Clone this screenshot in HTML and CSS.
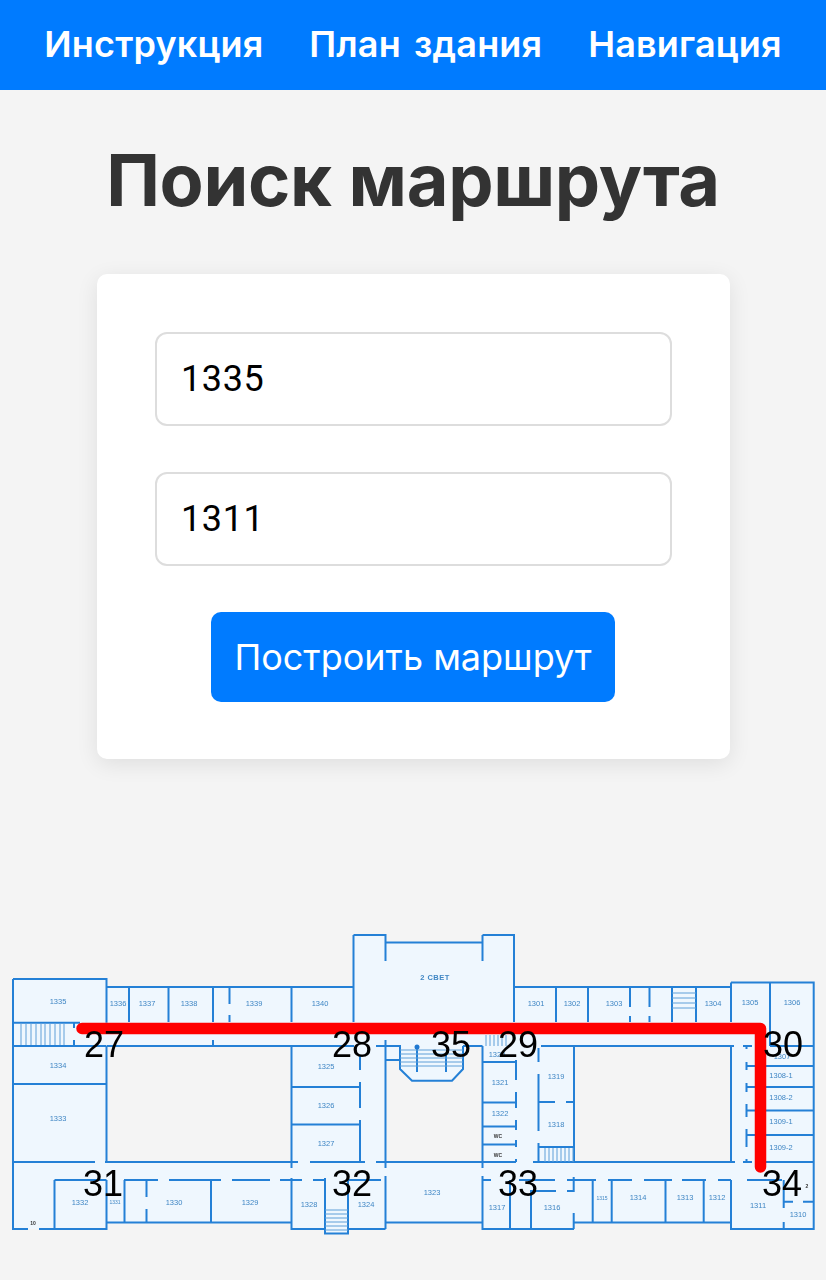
FILE: index.html
```html
<!DOCTYPE html>
<html lang="ru">
<head>
<meta charset="utf-8">
<title>Поиск маршрута</title>
<link rel="stylesheet" href="styles.css">
</head>
<body>
<nav class="nav">
  <a class="nav-link" href="#">Инструкция</a>
  <a class="nav-link" href="#">План здания</a>
  <a class="nav-link" href="#">Навигация</a>
</nav>
<h1 class="title">Поиск маршрута</h1>
<form class="card">
  <input class="field" type="text" value="1335">
  <input class="field" type="text" value="1311">
  <button class="submit" type="button">Построить маршрут</button>
</form>
<svg class="plan" viewBox="0 920 826 340" width="826" height="340" xmlns="http://www.w3.org/2000/svg">
  <path class="floor" d="M13 979H106.5V987H353.5V935H385.5V942.5H482.5V935H514V987H731V982.5H814V1229H731V1222.5H574V1229H482.5V1222.5H385.5V1229H348V1233.5H325V1229H291.5V1222.5H106.5V1229H13Z"/>
  <path class="court" d="M107 1046H291.5V1162H107Z"/>
  <path class="court" d="M385.5 1060H400V1069L412 1080.7H452L463 1069V1046H482.5V1162H385.5Z"/>
  <path class="court" d="M574 1046H731V1162H574Z"/>
  <path class="wall" d="M13 979H106.5V1022.7M13 979V1229H28M39 1229H106.5V1180M13 1022.7H80M13 1046H106.5M12 1084H106.5M13 1162H95M105 1162H298M310 1162H365M376 1162H516M533 1162H735M743 1162H752M766 1162H814
  M106.5 1046V1162M106.5 987H353.5M107 1046H354M129 987V1022M168.5 987V1022M213 987V1022M213 1040V1046M229.5 987V1004M229.5 1015V1022M74 1023V1028M74 1040V1045
  M54.5 1180V1229M54.5 1180H106.5M106.5 1222.5H291.5M124.5 1180V1222M146.5 1180V1197M146.5 1209V1222M211 1180V1222M124 1180H158M169 1180H221M232 1180H270M280 1180H302M313 1180H326M348 1180H381
  M353.5 935V1022M353.5 935H385.5V961M385.5 942.5H482.5M482.5 935V961M482.5 935H514V1022M291.5 987V1022M291.5 1046V1168M291.5 1178V1229H325M348 1229H385.5
  M291.5 1087H360M291.5 1124.5H360M360 1055V1070M360 1082V1108M360 1120V1162
  M385.5 1040V1168M385.5 1176V1229M376 1046H400V1069L412 1080.7H452L463 1069V1046M385.5 1060H400M463 1046H482.5M417 1046V1072M446 1055V1072
  M325 1178V1233.5H348V1178M385.5 1222.5H482.5M482.5 1046V1168M482.5 1176V1229H574
  M482.5 1062H516M516 1060V1080M516 1092V1108M516 1120V1130M516 1140V1147M516 1159V1162M482.5 1102.5H516.5M482.5 1126.5H516.5M482.5 1144.5H516.5
  M538.5 1048V1062M538.5 1074V1131M538.5 1102H555M566 1102H574M538.5 1143V1162M538.5 1147H574
  M482.5 1180H491M519 1180H555M530 1191H556M567 1191H574M510 1180V1229M531 1190V1229
  M514 987H731M556 987V1022M588 987V1022M630 987V1007M630 1016V1022M649.5 987V1007M649.5 1016V1022M672 987V1022M696 987V1022
  M731 982.5V1022M731 982.5H813.7V1229H731V1180M770 982.5V1046M541 1046H734M743 1046H752M770 1046H814M574 1046V1162M731 1046V1162
  M746.5 1046V1049M746.5 1062V1070M746.5 1083V1092M746.5 1104V1117M746.5 1129V1147M746.5 1159V1162M746.5 1066H814M746.5 1087H814M746.5 1110.5H814M746.5 1135H814
  M567 1180H596M608 1180H632M644 1180H672M682 1180H706M718 1180H731M747 1180H782M573.7 1177V1192M573.7 1213V1229M592.7 1180V1222M611.7 1180V1222M665.5 1180V1222M703.7 1180V1222M574 1222.5H731
  M783.7 1180V1208M783.7 1222V1229M784 1201.7H793M803 1201.7H814"/>
  <path class="stair" d="M21 1023V1045M26 1023V1045M31 1023V1045M36 1023V1045M41 1023V1045M45 1023V1045M50 1023V1045M55 1023V1045M60 1023V1045M64 1023V1045
  M400 1050H463M400 1054H463M400 1058H463M400 1062H463M400 1066H463M325 1210H348M325 1214H348M325 1218H348M325 1222H348M325 1226H348M325 1230H348
  M486 1035V1046M490 1035V1046M494 1035V1046M498 1035V1046M502 1035V1046M506 1035V1046M545 1148V1162M549 1148V1162M553 1148V1162M557 1148V1162M561 1148V1162M565 1148V1162M569 1148V1162M573 1148V1162
  M672 993H696M672 998H696M672 1003H696M672 1008H696"/>
  <circle class="dot" cx="417" cy="1047" r="2.5"/>
  <g class="rooms">
    <text x="58" y="1004">1335</text><text x="118" y="1006">1336</text><text x="147" y="1006">1337</text><text x="189" y="1006">1338</text><text x="254" y="1006">1339</text><text x="320" y="1006">1340</text>
    <text x="536" y="1006">1301</text><text x="572" y="1006">1302</text><text x="614" y="1006">1303</text><text x="713" y="1006">1304</text><text x="750" y="1005">1305</text><text x="792" y="1005">1306</text>
    <text x="58" y="1068">1334</text><text x="58" y="1121">1333</text><text x="326" y="1069">1325</text><text x="326" y="1108">1326</text><text x="326" y="1146">1327</text>
    <text x="497" y="1057">1320</text><text x="500" y="1085">1321</text><text x="500" y="1116">1322</text><text x="556" y="1079">1319</text><text x="556" y="1127">1318</text>
    <text x="782" y="1059">1307</text><text x="781" y="1078">1308-1</text><text x="781" y="1100">1308-2</text><text x="781" y="1124">1309-1</text><text x="781" y="1150">1309-2</text>
    <text x="80" y="1205">1332</text><text x="174" y="1205">1330</text><text x="250" y="1205">1329</text><text x="309" y="1207">1328</text><text x="366" y="1207">1324</text><text x="432" y="1195">1323</text>
    <text x="497" y="1210">1317</text><text x="552" y="1210">1316</text><text x="638" y="1200">1314</text><text x="685" y="1200">1313</text><text x="717" y="1200">1312</text><text x="758" y="1208">1311</text><text x="798" y="1217">1310</text>
    <text class="tiny" x="115" y="1204">1331</text><text class="tiny" x="602" y="1200">1315</text>
    <text class="bold" x="435" y="980">2 СВЕТ</text>
    <text class="mark" x="498" y="1138">WC</text><text class="mark" x="498" y="1157">WC</text><text class="mark" x="33" y="1225">10</text><text class="mark" x="807" y="1188">2</text>
  </g>
  <path class="route" d="M82 1028.5H760.5V1167"/>
  <g class="points">
    <text x="84" y="1057">27</text><text x="332" y="1057">28</text><text x="431" y="1057">35</text><text x="498" y="1057">29</text><text x="763" y="1057">30</text>
    <text x="83" y="1196">31</text><text x="332" y="1196">32</text><text x="498" y="1196">33</text><text x="762" y="1196">34</text>
  </g>
</svg>
</body>
</html>
```
FILE: styles.css
```css
* { box-sizing: border-box; }
html, body { margin: 0; padding: 0; }
body {
  background: #f4f4f4;
  color: #333;
  font-family: Inter, "Noto Sans", sans-serif;
}
.nav {
  display: flex;
  justify-content: center;
  align-items: center;
  gap: 46px;
  height: 90px;
  padding-bottom: 3px;
  background: #007bff;
}
.nav-link {
  color: #fff;
  font-size: 36px;
  font-weight: 600;
  letter-spacing: 0.15px;
  word-spacing: 4px;
  text-decoration: none;
  white-space: nowrap;
}
.title {
  margin: 0;
  padding-top: 46px;
  height: 184px;
  text-align: center;
  font-size: 72px;
  line-height: 88px;
  font-weight: 650;
  letter-spacing: -0.3px;
  color: #333;
}
.card {
  display: flex;
  flex-direction: column;
  align-items: center;
  width: 633px;
  height: 485px;
  margin-left: 97px;
  padding: 58px 58px 0;
  background: #fff;
  border-radius: 10px;
  box-shadow: 0 5px 22px rgba(0, 0, 0, 0.09);
}
.field {
  display: block;
  width: 517px;
  height: 94px;
  margin-bottom: 46px;
  padding: 0 24px;
  border: 2px solid #ddd;
  border-radius: 12px;
  background: #fff;
  color: #000;
  font-family: Roboto, sans-serif;
  font-size: 36px;
  letter-spacing: 0.6px;
  outline: none;
}
.submit {
  width: 404px;
  height: 90px;
  margin-right: 1px;
  border: 0;
  border-radius: 10px;
  background: #007bff;
  color: #fff;
  font-family: inherit;
  font-size: 36px;
  font-weight: 400;
  white-space: nowrap;
  padding: 0;
}
.plan {
  display: block;
  margin-top: 161px;
  filter: blur(0.35px);
}
.floor { fill: #eff7fe; }
.court { fill: #f4f4f4; }
.wall { fill: none; stroke: #2480d6; stroke-width: 2; }
.stair { fill: none; stroke: #5f9fd8; stroke-width: 1; }
.dot { fill: #1f78d1; }
.rooms text {
  fill: #3f86c4;
  font-family: "Liberation Sans", sans-serif;
  font-size: 7.5px;
  font-weight: 400;
  text-anchor: middle;
}
.rooms .tiny { font-size: 5px; }
.rooms .bold { font-size: 7.5px; font-weight: 700; letter-spacing: 0.5px; }
.rooms .mark { fill: #333; font-size: 5px; font-weight: 700; }
.route {
  fill: none;
  stroke: #ff0000;
  stroke-width: 11.5;
  stroke-linecap: round;
  stroke-linejoin: round;
}
.points text {
  fill: #000;
  font-family: "Liberation Sans", sans-serif;
  font-size: 36px;
}
```
